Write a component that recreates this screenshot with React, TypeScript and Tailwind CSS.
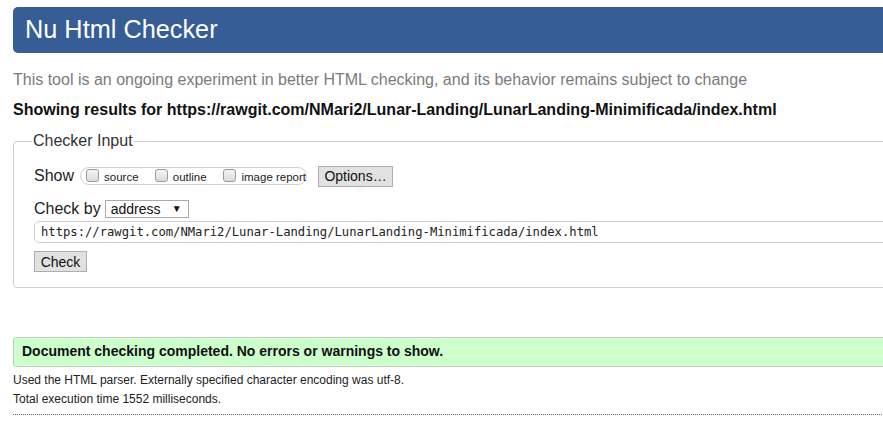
import React from "react";

const Box = ({ label }: { label: string }) => (
  <span className="flex items-center whitespace-nowrap">
    <span className="inline-block w-[13px] h-[13px] rounded-[3px] border border-[#9a9a9a] bg-gradient-to-b from-[#f4f4f4] to-[#dcdcdc] mr-[5px] mb-[2px]" />
    <span className="text-[11.5px] leading-[14px] text-[#222] translate-y-[1px]">{label}</span>
  </span>
);

const App = () => {
  return (
    <div className="w-[883px] h-[440px] overflow-hidden bg-white font-['Liberation_Sans',Arial,sans-serif] text-[#111]">
      <div className="w-[1000px] pl-[13px]">
        <div className="mt-[7px] h-[46px] bg-[#365d95] rounded-l-[5px] flex items-center pl-[12px]">
          <h1 className="text-[25.3px] text-white leading-none">Nu Html Checker</h1>
        </div>

        <p className="mt-[17px] text-[16px] leading-[20px] text-[#7b7b7b]">
          This tool is an ongoing experiment in better HTML checking, and its behavior remains subject to change
        </p>
        <p className="mt-[10px] text-[16px] leading-[20px] font-bold text-[#111]">
          Showing results for https://rawgit.com/NMari2/Lunar-Landing/LunarLanding-Minimificada/index.html
        </p>

        <fieldset className="mt-[11px] border border-[#cfcfcf] rounded-[4px] pl-[20px] pb-[13px]">
          <legend className="ml-[-2px] px-[1px] text-[16px] leading-[20px] text-[#333]">Checker Input</legend>

          <div className="mt-[14px] flex items-center h-[22px]">
            <span className="text-[16px] text-[#222] mr-[6px]">Show</span>
            <div className="h-[18px] w-[227px] border border-[#cfcfcf] rounded-full flex items-center pl-[5px]">
              <span className="w-[69px]"><Box label="source" /></span>
              <span className="w-[69px]"><Box label="outline" /></span>
              <Box label="image report" />
            </div>
            <button className="ml-[11px] h-[21px] w-[75px] border border-[#adadad] bg-[#e1e1e1] text-[14px] text-[#111] leading-none">
              Options…
            </button>
          </div>

          <div className="mt-[12px] flex items-center h-[20px]">
            <span className="text-[16px] text-[#222] mr-[4px]">Check by</span>
            <div className="h-[18px] w-[84px] border border-[#a9a9a9] flex items-center justify-between pl-[5px] pr-[6px] text-[14px] text-[#111]">
              <span className="leading-none">address</span>
              <span className="text-[10px] leading-none">▼</span>
            </div>
          </div>

          <div className="mt-[2px] h-[22px] border border-[#cfcfcf] rounded-[5px] flex items-center pl-[6px] font-['DejaVu_Sans_Mono',monospace] text-[12.2px] text-[#222]">
            https://rawgit.com/NMari2/Lunar-Landing/LunarLanding-Minimificada/index.html
          </div>

          <button className="mt-[8px] h-[21px] w-[53px] border border-[#adadad] bg-[#e1e1e1] text-[14px] text-[#111] leading-none">
            Check
          </button>
        </fieldset>

        <div className="mt-[49px] h-[30px] bg-[#ccffcc] border border-[#c8c8c8] rounded-l-[3px] flex items-center pl-[8px]">
          <span className="text-[14px] font-bold text-[#111]">Document checking completed. No errors or warnings to show.</span>
        </div>

        <p className="mt-[4px] text-[12px] leading-[19px] text-[#222]">
          Used the HTML parser. Externally specified character encoding was utf-8.
        </p>
        <p className="text-[12px] leading-[19px] text-[#222]">Total execution time 1552 milliseconds.</p>
        <div className="mt-[5px] border-t border-dotted border-[#666]" />
      </div>
    </div>
  );
};

export default App;
